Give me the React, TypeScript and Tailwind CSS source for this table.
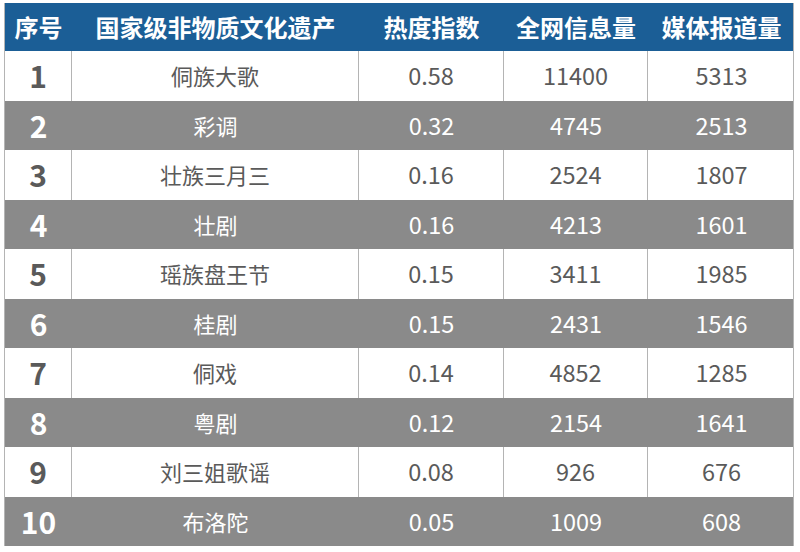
const rows = [
  ["1", "侗族大歌", "0.58", "11400", "5313"],
  ["2", "彩调", "0.32", "4745", "2513"],
  ["3", "壮族三月三", "0.16", "2524", "1807"],
  ["4", "壮剧", "0.16", "4213", "1601"],
  ["5", "瑶族盘王节", "0.15", "3411", "1985"],
  ["6", "桂剧", "0.15", "2431", "1546"],
  ["7", "侗戏", "0.14", "4852", "1285"],
  ["8", "粤剧", "0.12", "2154", "1641"],
  ["9", "刘三姐歌谣", "0.08", "926", "676"],
  ["10", "布洛陀", "0.05", "1009", "608"],
];

const headers = ["序号", "国家级非物质文化遗产", "热度指数", "全网信息量", "媒体报道量"];

const cols = "grid grid-cols-[67px_287px_145px_144px_147px]";

export default function App() {
  return (
    <div className="h-[552px] w-[800px] bg-white pl-[4px] pt-[3px] font-['Noto_Sans_CJK_SC','Noto_Sans',sans-serif]">
      <div className="w-[790px] border-l border-r border-[#b4b4b4]">
        <div className={`${cols} h-[48px] items-center bg-[#1b5e96] text-[24px] font-bold text-white`}>
          {headers.map((h) => (
            <div key={h} className="text-center">
              {h}
            </div>
          ))}
        </div>
        {rows.map((r, i) => {
          const gray = i % 2 === 1;
          return (
            <div
              key={r[0]}
              className={`${cols} h-[49.5px] items-stretch ${
                gray ? "bg-[#8a8a8a] text-white" : "bg-white text-[#5a5a5a]"
              }`}
            >
              {r.map((c, j) => (
                <div
                  key={j}
                  className={`flex items-center justify-center ${
                    j === 0 ? "text-[30px] font-bold" : j === 1 ? "text-[22px]" : "text-[23.5px]"
                  } ${!gray && j < 4 ? "border-r border-[#b4b4b4]" : ""}`}
                >
                  {c}
                </div>
              ))}
            </div>
          );
        })}
      </div>
    </div>
  );
}
